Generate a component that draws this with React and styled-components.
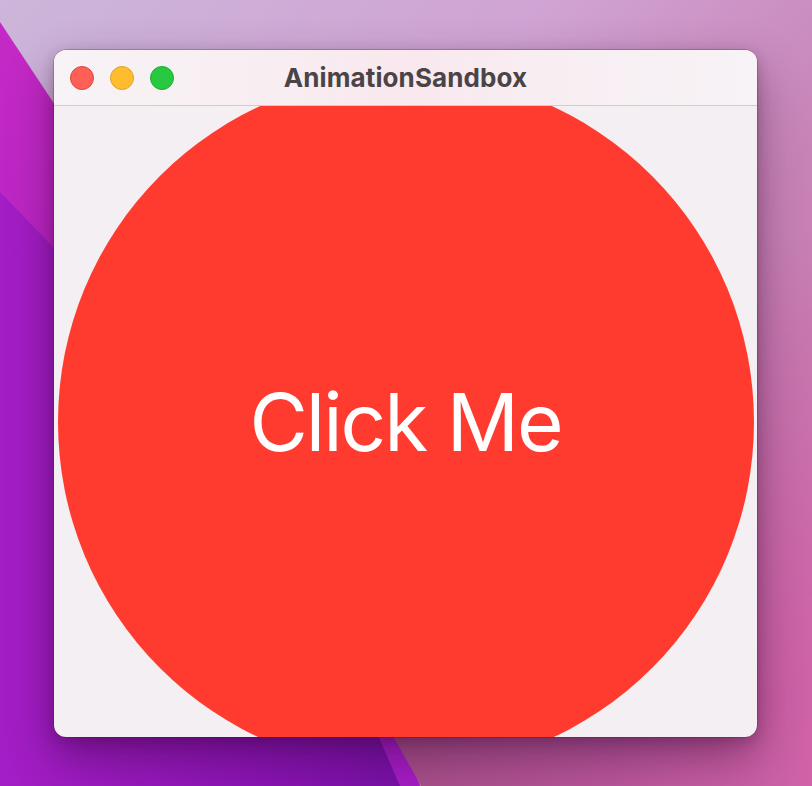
import React from 'react';
import styled, { createGlobalStyle } from 'styled-components';

const GlobalStyle = createGlobalStyle`
  html, body {
    margin: 0;
    padding: 0;
    background: #c9a6d2;
  }
  body {
    font-family: Inter, 'Noto Sans', sans-serif;
  }
`;

const Desktop = styled.div`
  position: relative;
  width: 812px;
  height: 786px;
  overflow: hidden;
  box-sizing: border-box;
  padding: 50px 55px 49px 54px;
  background: linear-gradient(135deg, #ccb6da 0%, #d0a3d3 35%, #c883b6 60%, #c070a2 100%);
`;

/* wallpaper shapes sitting under the window */
const Wave = styled.div`
  position: absolute;
  inset: 0;
  clip-path: ${(p) => p.$shape};
  background: ${(p) => p.$fill};
  ${(p) => p.$fade && `
    -webkit-mask-image: linear-gradient(180deg, transparent 30%, #000 88%);
    mask-image: linear-gradient(180deg, transparent 30%, #000 88%);
  `}
`;

const Window = styled.div`
  position: relative;
  z-index: 1;
  width: 703px;
  height: 687px;
  display: flex;
  flex-direction: column;
  border-radius: 12px;
  overflow: hidden;
  background: #f3eff3;
  box-shadow: 0 0 0 0.5px rgba(60, 20, 60, 0.45), 0 18px 45px rgba(40, 0, 40, 0.42),
    0 4px 14px rgba(40, 0, 40, 0.2);
`;

const TitleBar = styled.div`
  position: relative;
  height: 55px;
  flex-shrink: 0;
  display: flex;
  align-items: center;
  justify-content: center;
  border-bottom: 1px solid #d3cbd0;
  background: linear-gradient(90deg, #f7f3f6 0%, #f8eef1 30%, #f9e8ed 50%, #f8eef2 70%, #f7f3f6 100%);
`;

const Lights = styled.div`
  position: absolute;
  left: 16px;
  top: 16px;
  display: flex;
  gap: 16px;
`;

const Light = styled.span`
  width: 22px;
  height: 22px;
  border-radius: 50%;
  background: ${(p) => p.$color};
  border: 1px solid ${(p) => p.$edge};
`;

const Title = styled.h1`
  margin: 0;
  font-family: Inter, 'Noto Sans', sans-serif;
  font-weight: 700;
  font-size: 26px;
  letter-spacing: 0.1px;
  color: #4a4448;
`;

const Content = styled.main`
  flex: 1;
  display: flex;
  align-items: center;
  justify-content: center;
  overflow: hidden;
`;

const CircleButton = styled.button`
  flex-shrink: 0;
  width: 696px;
  height: 696px;
  border: none;
  border-radius: 50%;
  background: #ff3b30;
  color: #ffffff;
  font-family: Inter, 'Noto Sans', sans-serif;
  font-weight: 400;
  font-size: 80px;
  letter-spacing: -2px;
  padding: 0;
  cursor: pointer;
`;

const App = () => {
  return (
    <>
      <GlobalStyle />
      <Desktop>
        <Wave
          $shape="polygon(0 22px, 330px 520px, 420px 786px, 0 786px)"
          $fill="linear-gradient(180deg, #c62ac6 0%, #b824c4 40%, #a41cc4 100%)"
        />
        <Wave
          $shape="polygon(0 192px, 260px 462px, 400px 786px, 0 786px)"
          $fill="linear-gradient(90deg, #a41ec6 0%, #8c14b4 30%, #6c0e9e 60%, #6a0e9c 100%)"
        />
        <Wave
          $shape="polygon(250px 480px, 812px 150px, 812px 786px, 421px 786px)"
          $fill="linear-gradient(90deg, #94446e 0%, #a04c80 40%, #b8559a 75%, #d062a8 100%)"
          $fade
        />
        <Window>
          <TitleBar>
            <Lights>
              <Light $color="#fe5f57" $edge="#e2463f" />
              <Light $color="#febc2e" $edge="#e0a325" />
              <Light $color="#28c840" $edge="#1fad31" />
            </Lights>
            <Title>AnimationSandbox</Title>
          </TitleBar>
          <Content>
            <CircleButton>Click Me</CircleButton>
          </Content>
        </Window>
      </Desktop>
    </>
  );
};

export default App;
